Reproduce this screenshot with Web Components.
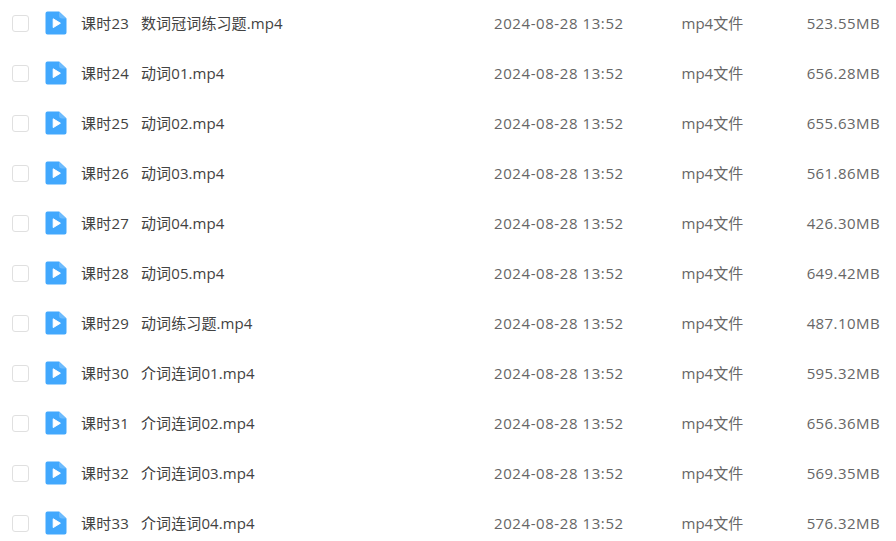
<!DOCTYPE html>
<html>
<head>
<meta charset="utf-8">
<title>文件列表</title>
<style>
  html, body { margin: 0; background: #fff; overflow: hidden; }
  body { font-family: "Open Sans", "Noto Sans CJK SC", sans-serif; }
</style>
</head>
<body>
<file-list></file-list>
<script>
class FileIcon extends HTMLElement {
  constructor() {
    super();
    this.attachShadow({mode: 'open'});
    this.shadowRoot.innerHTML = `
      <style>
        :host { display: block; width: 22px; height: 24px; }
        svg { display: block; }
      </style>
      <svg width="22" height="24" viewBox="0 0 22 24">
        <path d="M2.5 0.5H14L21.5 7.5V21.5a2 2 0 0 1-2 2H2.5a2 2 0 0 1-2-2V2.5a2 2 0 0 1 2-2z" fill="#42a8fd"/>
        <path d="M14 0.5L21.5 7.5H17a3 3 0 0 1-3-3z" fill="#6dbbfd"/>
        <path d="M8.2 7.8L15.4 12.2L8.2 16.6z" fill="#fff" stroke="#fff" stroke-width="1" stroke-linejoin="round"/>
      </svg>
    `;
  }
}

class FileRow extends HTMLElement {
  constructor() {
    super();
    this.attachShadow({mode: 'open'});
    this.shadowRoot.innerHTML = `
      <style>
        :host {
          display: grid;
          grid-template-columns: 45px 36px 413px 187.5px 1fr auto;
          align-items: center;
          height: 50px;
          padding-right: 16px;
          font-size: 15px;
          color: #666;
        }
        .check {
          width: 15px;
          height: 15px;
          margin-left: 12px;
          border: 1px solid #e0e0e0;
          border-radius: 3px;
          background: #fff;
        }
        .name { color: #424242; white-space: nowrap; display: flex; padding-bottom: 2px; }
        ::slotted([slot="lesson"]) { width: 60px; letter-spacing: 0.2px; }
        ::slotted([slot="title"]) { letter-spacing: 0.1px; }
        .time { letter-spacing: 0.58px; }
        .type { padding-bottom: 2px; }
        .size { letter-spacing: 0.42px; }
      </style>
      <div class="check"></div>
      <file-icon></file-icon>
      <div class="name"><slot name="lesson"></slot><slot name="title"></slot></div>
      <div class="time"><slot name="time"></slot></div>
      <div class="type"><slot name="type"></slot></div>
      <div class="size"><slot name="size"></slot></div>
    `;
  }
}

class FileList extends HTMLElement {
  constructor() {
    super();
    this.attachShadow({mode: 'open'});
    this.shadowRoot.innerHTML = `
      <style>
        :host { display: block; margin-top: -2px; }
      </style>
      <slot></slot>
    `;
  }

  connectedCallback() {
    const files = [
      ['课时23', '数词冠词练习题.mp4', '523.55MB'],
      ['课时24', '动词01.mp4', '656.28MB'],
      ['课时25', '动词02.mp4', '655.63MB'],
      ['课时26', '动词03.mp4', '561.86MB'],
      ['课时27', '动词04.mp4', '426.30MB'],
      ['课时28', '动词05.mp4', '649.42MB'],
      ['课时29', '动词练习题.mp4', '487.10MB'],
      ['课时30', '介词连词01.mp4', '595.32MB'],
      ['课时31', '介词连词02.mp4', '656.36MB'],
      ['课时32', '介词连词03.mp4', '569.35MB'],
      ['课时33', '介词连词04.mp4', '576.32MB'],
    ];
    for (const [lesson, title, size] of files) {
      const row = document.createElement('file-row');
      row.innerHTML = `
        <span slot="lesson">${lesson}</span>
        <span slot="title">${title}</span>
        <span slot="time">2024-08-28 13:52</span>
        <span slot="type">mp4文件</span>
        <span slot="size">${size}</span>
      `;
      this.appendChild(row);
    }
  }
}

customElements.define('file-icon', FileIcon);
customElements.define('file-row', FileRow);
customElements.define('file-list', FileList);
</script>
</body>
</html>
